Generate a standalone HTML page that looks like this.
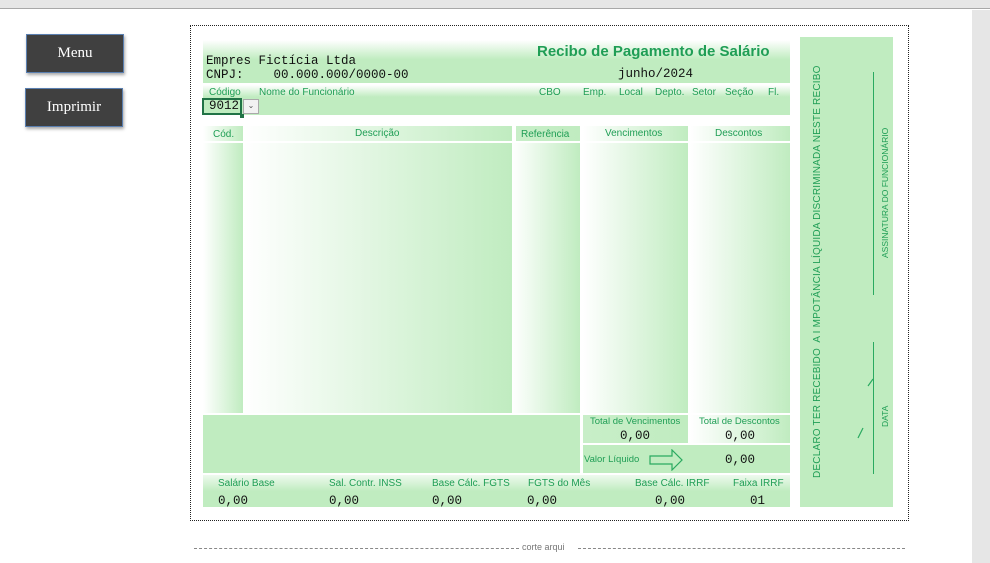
<!DOCTYPE html>
<html><head><meta charset="utf-8"><style>
*{margin:0;padding:0;box-sizing:border-box}
body{width:990px;height:563px;background:#fff;position:relative;overflow:hidden;font-family:"Liberation Sans",sans-serif}
.a{position:absolute}
.g{background:#c0ecc0}
.t{color:#1f9e55;font-size:10px;white-space:nowrap}
.m{font-family:"Liberation Mono",monospace;font-size:12.5px;color:#111;white-space:nowrap}
.btn{position:absolute;background:#404040;border:1px solid #5a7fb0;color:#fff;font-family:"Liberation Serif",serif;font-size:15px;text-align:center;box-shadow:1px 2px 3px rgba(0,0,0,.35)}
.col{background:linear-gradient(to right,#fff,#c0ecc0)}
</style></head><body>
<div class="a" style="left:0;top:0;width:990px;height:9px;background:#e6e6e6;border-bottom:1px solid #a8a8a8"></div>
<div class="a" style="left:972px;top:10px;width:18px;height:553px;background:#e6e6e6"></div>
<div class="btn" style="left:26px;top:34px;width:98px;height:39px;line-height:37px">Menu</div>
<div class="btn" style="left:25px;top:88px;width:98px;height:39px;line-height:37px">Imprimir</div>
<div class="a" style="left:190px;top:25px;width:719px;height:496px;border:1px dotted #222"></div>

<div class="a" style="left:203px;top:40px;width:587px;height:43px;background:linear-gradient(#fff 0%,#c0ecc0 45%,#c0ecc0 100%)"></div>
<div class="a m" style="left:206px;top:54px">Empres Fictícia Ltda</div>
<div class="a m" style="left:206px;top:68px">CNPJ:&nbsp;&nbsp;&nbsp;&nbsp;00.000.000/0000-00</div>
<div class="a" style="left:537px;top:43px;color:#1f9e55;font-weight:bold;font-size:15px;white-space:nowrap">Recibo de Pagamento de Salário</div>
<div class="a m" style="left:618px;top:67px">junho/2024</div>
<div class="a" style="left:203px;top:85px;width:587px;height:30px;background:linear-gradient(#fff 0%,#c0ecc0 40%,#c0ecc0 100%)"></div>
<div class="a t" style="left:209px;top:87px">Código</div>
<div class="a t" style="left:259px;top:87px">Nome do Funcionário</div>
<div class="a t" style="left:539px;top:87px">CBO</div>
<div class="a t" style="left:583px;top:87px">Emp.</div>
<div class="a t" style="left:619px;top:87px">Local</div>
<div class="a t" style="left:655px;top:87px">Depto.</div>
<div class="a t" style="left:692px;top:87px">Setor</div>
<div class="a t" style="left:725px;top:87px">Seção</div>
<div class="a t" style="left:768px;top:87px">Fl.</div>
<div class="a" style="left:202px;top:98px;width:40px;height:17px;border:2px solid #217346;background:#c0ecc0"></div>
<div class="a m" style="left:209px;top:99px">9012</div>
<div class="a" style="left:240px;top:114px;width:4px;height:4px;background:#217346"></div>
<div class="a" style="left:243px;top:99px;width:16px;height:15px;background:#f2f2f2;border:1px solid #aaa;font-size:8px;text-align:center;color:#555;line-height:12px">⌄</div>

<div class="a col" style="left:203px;top:126px;width:40px;height:15px"></div>
<div class="a col" style="left:243px;top:126px;width:269px;height:15px"></div>
<div class="a col" style="left:516px;top:126px;width:64px;height:15px;background:linear-gradient(to right,#c8eec8,#c0ecc0)"></div>
<div class="a col" style="left:583px;top:126px;width:105px;height:15px"></div>
<div class="a col" style="left:690px;top:126px;width:100px;height:15px"></div>
<div class="a t" style="left:213px;top:129px">Cód.</div>
<div class="a t" style="left:355px;top:128px">Descrição</div>
<div class="a t" style="left:521px;top:129px">Referência</div>
<div class="a t" style="left:605px;top:128px">Vencimentos</div>
<div class="a t" style="left:715px;top:128px">Descontos</div>
<div class="a col" style="left:203px;top:143px;width:40px;height:270px"></div>
<div class="a col" style="left:243px;top:143px;width:269px;height:270px"></div>
<div class="a col" style="left:512px;top:143px;width:68px;height:270px"></div>
<div class="a col" style="left:583px;top:143px;width:105px;height:270px"></div>
<div class="a col" style="left:690px;top:143px;width:100px;height:270px"></div>

<div class="a g" style="left:203px;top:415px;width:377px;height:58px"></div>
<div class="a col" style="left:583px;top:415px;width:105px;height:28px;background:linear-gradient(to right,#c8eec8,#c0ecc0)"></div>
<div class="a col" style="left:690px;top:415px;width:100px;height:28px"></div>
<div class="a g" style="left:583px;top:445px;width:207px;height:28px"></div>
<div class="a t" style="left:590px;top:416px;font-size:9.5px">Total de Vencimentos</div>
<div class="a t" style="left:699px;top:416px;font-size:9.5px">Total de Descontos</div>
<div class="a m" style="left:620px;top:429px">0,00</div>
<div class="a m" style="left:725px;top:429px">0,00</div>
<div class="a t" style="left:584px;top:454px;font-size:9.5px">Valor Líquido</div>
<svg class="a" style="left:649px;top:449px" width="34" height="22"><path d="M1 7H23V1L33 11L23 21V15H1Z" fill="none" stroke="#2aaa60" stroke-width="1.2"/></svg>
<div class="a m" style="left:725px;top:453px">0,00</div>

<div class="a" style="left:203px;top:475px;width:587px;height:32px;background:linear-gradient(#eefaee,#c0ecc0 50%,#c0ecc0)"></div>
<div class="a t" style="left:218px;top:478px">Salário Base</div>
<div class="a t" style="left:329px;top:478px">Sal. Contr. INSS</div>
<div class="a t" style="left:432px;top:478px">Base Cálc. FGTS</div>
<div class="a t" style="left:528px;top:478px">FGTS do Mês</div>
<div class="a t" style="left:635px;top:478px">Base Cálc. IRRF</div>
<div class="a t" style="left:733px;top:478px">Faixa IRRF</div>
<div class="a m" style="left:218px;top:494px">0,00</div>
<div class="a m" style="left:329px;top:494px">0,00</div>
<div class="a m" style="left:432px;top:494px">0,00</div>
<div class="a m" style="left:527px;top:494px">0,00</div>
<div class="a m" style="left:655px;top:494px">0,00</div>
<div class="a m" style="left:750px;top:494px">01</div>

<div class="a g" style="left:800px;top:37px;width:93px;height:470px"></div>
<div class="a t" style="left:812px;top:478px;transform-origin:0 0;transform:rotate(-90deg);font-size:10px;letter-spacing:0.2px">DECLARO TER RECEBIDO&nbsp; A I MPOTÂNCIA LÍQUIDA DISCRIMINADA NESTE RECIBO</div>
<div class="a" style="left:873px;top:72px;width:1px;height:223px;background:#2aaa60"></div>
<div class="a t" style="left:880px;top:258px;transform-origin:0 0;transform:rotate(-90deg);font-size:8.5px">ASSINATURA DO FUNCIONÁRIO</div>
<div class="a" style="left:873px;top:342px;width:1px;height:132px;background:#2aaa60"></div>
<svg class="a" style="left:856px;top:378px" width="18" height="64"><path d="M12 8 L17 1 M2 60 L7 50" stroke="#2aaa60" stroke-width="1.2" fill="none"/></svg>
<div class="a t" style="left:880px;top:427px;transform-origin:0 0;transform:rotate(-90deg);font-size:8.5px">DATA</div>

<div class="a" style="left:194px;top:548px;width:325px;border-top:1px dashed #888"></div>
<div class="a" style="left:522px;top:542px;font-size:9px;color:#777">corte arqui</div>
<div class="a" style="left:578px;top:548px;width:327px;border-top:1px dashed #888"></div>
</body></html>
